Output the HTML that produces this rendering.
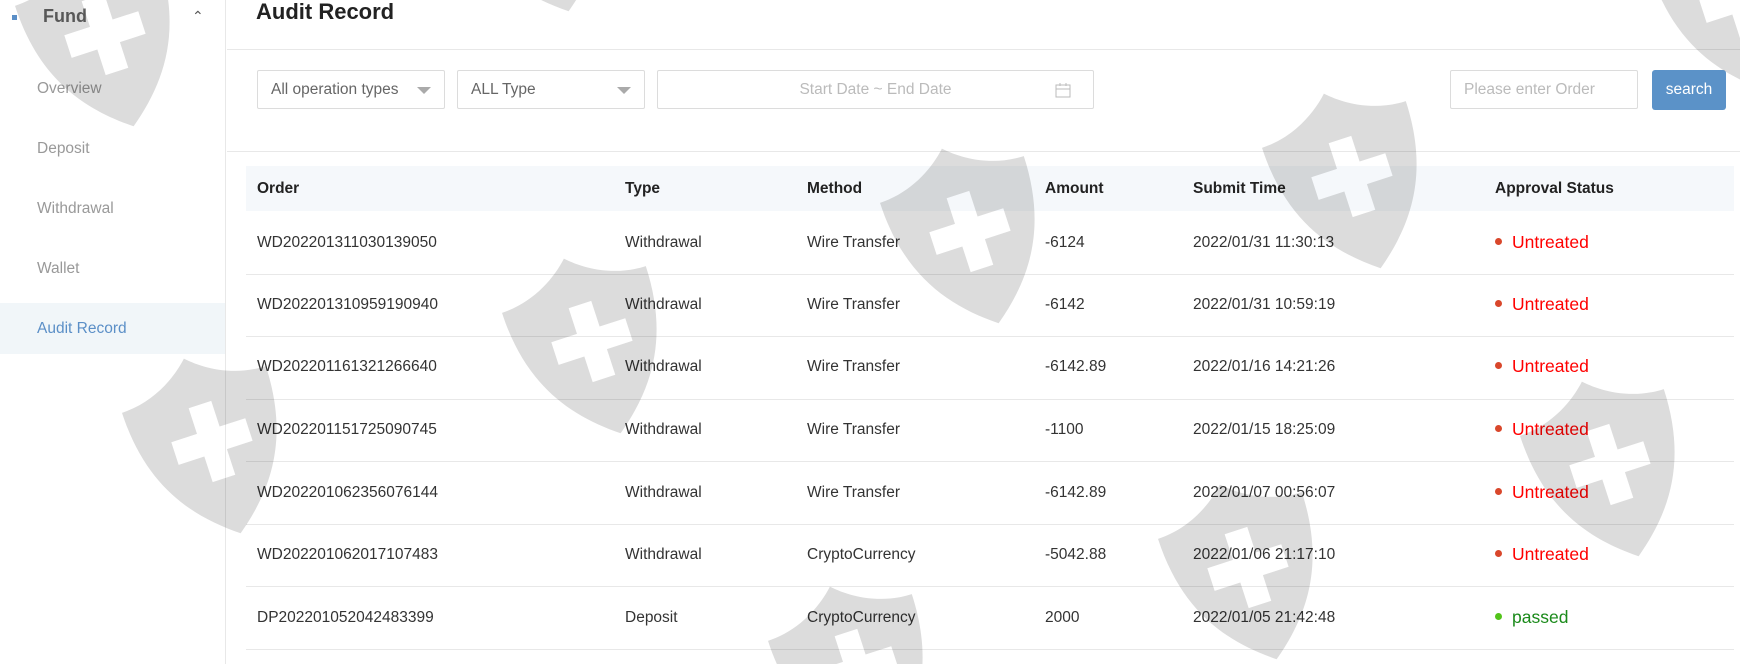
<!DOCTYPE html>
<html><head><meta charset="utf-8"><style>
*{box-sizing:border-box;margin:0;padding:0}
html,body{width:1740px;height:664px;overflow:hidden}
body{background:#fff;font-family:"Liberation Sans",sans-serif;color:#333;position:relative}
.side{position:absolute;left:0;top:0;width:226px;height:664px;border-right:1px solid #e8e8e8}
.side .fund{position:absolute;left:43px;top:6px;font-size:18px;font-weight:bold;color:#666}
.side .dot{position:absolute;left:12px;top:15px;width:5px;height:5px;background:#5b8fc7}
.side .chev{position:absolute;left:192px;top:8px;font-size:14px;color:#555}
.side .it{position:absolute;left:37px;font-size:15.5px;color:#999}
.side .act{position:absolute;left:0;top:303px;width:225px;height:51px;background:#f1f6f9}
.title{position:absolute;left:256px;top:-1px;font-size:22px;font-weight:bold;color:#222}
.hl{position:absolute;left:227px;right:0;height:1px;background:#e8e8e8}
.box{position:absolute;top:70px;height:39px;border:1px solid #dcdcdc;border-radius:2px;font-size:15.5px;color:#666;line-height:37px;padding-left:13px}
.arr{position:absolute;right:13px;top:16px;width:0;height:0;border-left:7px solid transparent;border-right:7px solid transparent;border-top:7px solid #aaa}
.btn{position:absolute;left:1652px;top:70px;width:74px;height:40px;background:#5b92c8;color:#fff;border-radius:3px;font-size:15.5px;line-height:40px;text-align:center}
.th{position:absolute;left:246px;top:166px;width:1488px;height:45px;background:#f5f8fb}
.c{position:absolute;font-size:15.5px;white-space:nowrap}
.h{font-weight:bold;color:#222}
.rl{position:absolute;left:246px;width:1488px;height:1px;background:#e8e8e8}
.st{font-size:17.5px}
.st i{display:inline-block;width:7px;height:7px;border-radius:50%;margin-right:10px;vertical-align:middle;position:relative;top:-2px}
svg.wm{position:absolute;left:0;top:0;mix-blend-mode:multiply;pointer-events:none}
</style></head><body>
<div class="side">
<div class="act"></div>
<div class="dot"></div><div class="fund">Fund</div><div class="chev">&#8963;</div>
<div class="it" style="top:80px">Overview</div>
<div class="it" style="top:140px">Deposit</div>
<div class="it" style="top:200px">Withdrawal</div>
<div class="it" style="top:260px">Wallet</div>
<div class="it" style="top:320px;color:#5b8fc7">Audit Record</div>
</div>
<div class="title">Audit Record</div>
<div class="hl" style="top:49px"></div>
<div class="box" style="left:257px;width:188px">All operation types<span class="arr"></span></div>
<div class="box" style="left:457px;width:188px">ALL Type<span class="arr"></span></div>
<div class="box" style="left:657px;width:437px;text-align:center;color:#bbb;padding-left:0">Start Date ~ End Date
<svg style="position:absolute;right:22px;top:11px" width="16" height="16" viewBox="0 0 16 16"><rect x="1" y="3" width="14" height="12" fill="none" stroke="#bbb"/><line x1="1" y1="7" x2="15" y2="7" stroke="#bbb"/><line x1="5" y1="1" x2="5" y2="4" stroke="#bbb"/><line x1="11" y1="1" x2="11" y2="4" stroke="#bbb"/></svg></div>
<div class="box" style="left:1450px;width:188px;color:#bbb">Please enter Order</div>
<div class="btn">search</div>
<div class="hl" style="top:151px"></div>
<div class="th"></div>
<div class="c h" style="left:257px;top:180px">Order</div>
<div class="c h" style="left:625px;top:180px">Type</div>
<div class="c h" style="left:807px;top:180px">Method</div>
<div class="c h" style="left:1045px;top:180px">Amount</div>
<div class="c h" style="left:1193px;top:180px">Submit Time</div>
<div class="c h" style="left:1495px;top:180px">Approval Status</div>

<div class="c" style="left:257px;top:234px">WD202201311030139050</div><div class="c" style="left:625px;top:234px">Withdrawal</div><div class="c" style="left:807px;top:234px">Wire Transfer</div><div class="c" style="left:1045px;top:234px">-6124</div><div class="c" style="left:1193px;top:234px">2022/01/31 11:30:13</div><div class="c st" style="left:1495px;top:232px;color:#f00"><i style="background:#d9472b"></i>Untreated</div>
<div class="rl" style="top:274px"></div>
<div class="c" style="left:257px;top:296px">WD202201310959190940</div><div class="c" style="left:625px;top:296px">Withdrawal</div><div class="c" style="left:807px;top:296px">Wire Transfer</div><div class="c" style="left:1045px;top:296px">-6142</div><div class="c" style="left:1193px;top:296px">2022/01/31 10:59:19</div><div class="c st" style="left:1495px;top:294px;color:#f00"><i style="background:#d9472b"></i>Untreated</div>
<div class="rl" style="top:336px"></div>
<div class="c" style="left:257px;top:358px">WD202201161321266640</div><div class="c" style="left:625px;top:358px">Withdrawal</div><div class="c" style="left:807px;top:358px">Wire Transfer</div><div class="c" style="left:1045px;top:358px">-6142.89</div><div class="c" style="left:1193px;top:358px">2022/01/16 14:21:26</div><div class="c st" style="left:1495px;top:356px;color:#f00"><i style="background:#d9472b"></i>Untreated</div>
<div class="rl" style="top:399px"></div>
<div class="c" style="left:257px;top:421px">WD202201151725090745</div><div class="c" style="left:625px;top:421px">Withdrawal</div><div class="c" style="left:807px;top:421px">Wire Transfer</div><div class="c" style="left:1045px;top:421px">-1100</div><div class="c" style="left:1193px;top:421px">2022/01/15 18:25:09</div><div class="c st" style="left:1495px;top:419px;color:#f00"><i style="background:#d9472b"></i>Untreated</div>
<div class="rl" style="top:461px"></div>
<div class="c" style="left:257px;top:484px">WD202201062356076144</div><div class="c" style="left:625px;top:484px">Withdrawal</div><div class="c" style="left:807px;top:484px">Wire Transfer</div><div class="c" style="left:1045px;top:484px">-6142.89</div><div class="c" style="left:1193px;top:484px">2022/01/07 00:56:07</div><div class="c st" style="left:1495px;top:482px;color:#f00"><i style="background:#d9472b"></i>Untreated</div>
<div class="rl" style="top:524px"></div>
<div class="c" style="left:257px;top:546px">WD202201062017107483</div><div class="c" style="left:625px;top:546px">Withdrawal</div><div class="c" style="left:807px;top:546px">CryptoCurrency</div><div class="c" style="left:1045px;top:546px">-5042.88</div><div class="c" style="left:1193px;top:546px">2022/01/06 21:17:10</div><div class="c st" style="left:1495px;top:544px;color:#f00"><i style="background:#d9472b"></i>Untreated</div>
<div class="rl" style="top:586px"></div>
<div class="c" style="left:257px;top:609px">DP202201052042483399</div><div class="c" style="left:625px;top:609px">Deposit</div><div class="c" style="left:807px;top:609px">CryptoCurrency</div><div class="c" style="left:1045px;top:609px">2000</div><div class="c" style="left:1193px;top:609px">2022/01/05 21:42:48</div><div class="c st" style="left:1495px;top:607px;color:#1a8a1a"><i style="background:#52c41a"></i>passed</div>
<div class="rl" style="top:649px"></div>

<svg class="wm" width="1740" height="664" viewBox="0 0 1740 664">
<defs><g id="s"><path d="M0,30 C30,30 55,15 70,0 C85,15 110,30 140,30 C140,100 110,140 70,170 C30,140 0,100 0,30 Z" fill="#dcdcdc"/><path d="M60,45h22v25h25v22h-25v25h-22v-25h-25v-22h25z" fill="#fff"/></g></defs>
<use href="#s" transform="translate(5,-25) rotate(-18) scale(1.08)"/>
<use href="#s" transform="translate(440,-140) rotate(-18) scale(1.08)"/>
<use href="#s" transform="translate(870,172) rotate(-18) scale(1.08)"/>
<use href="#s" transform="translate(492,282) rotate(-18) scale(1.08)"/>
<use href="#s" transform="translate(112,382) rotate(-18) scale(1.08)"/>
<use href="#s" transform="translate(1252,117) rotate(-18) scale(1.08)"/>
<use href="#s" transform="translate(1510,405) rotate(-18) scale(1.08)"/>
<use href="#s" transform="translate(1148,508) rotate(-18) scale(1.08)"/>
<use href="#s" transform="translate(758,610) rotate(-18) scale(1.08)"/>
<use href="#s" transform="translate(1640,-60) rotate(-18) scale(1.08)"/>
</svg>
</body></html>
